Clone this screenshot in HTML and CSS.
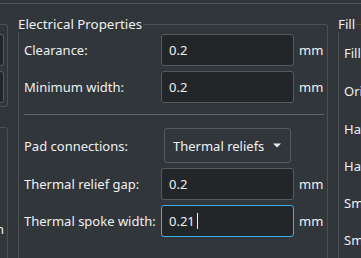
FILE: index.html
```html
<!DOCTYPE html>
<html>
    <head>
        <title>Zone Properties</title>
        <link rel="stylesheet" href="styles.css">
    </head>
    <body>
        <div class="topbar"></div>
        <div class="main">
            <div class="side">
                <div class="sidebox first">
                    <div class="stub"></div>
                    <div class="stub"></div>
                </div>
                <div class="sidebox second">
                    <div class="cut">Border style: Hatch pattern</div>
                </div>
            </div>

            <div class="group electrical">
                <span class="title">Electrical Properties</span>
                <div class="row">
                    <label>Clearance:</label>
                    <div class="field">0.2</div>
                    <span class="unit">mm</span>
                </div>
                <div class="row">
                    <label>Minimum width:</label>
                    <div class="field">0.2</div>
                    <span class="unit">mm</span>
                </div>
                <div class="sep"></div>
                <div class="row tall">
                    <label>Pad connections:</label>
                    <div class="combo">
                        <span>Thermal reliefs</span>
                        <svg class="arrow" width="8" height="5" viewBox="0 0 8 5"><polygon points="0,0.5 8,0.5 4,4.5" fill="#eff0f1"/></svg>
                    </div>
                </div>
                <div class="row">
                    <label>Thermal relief gap:</label>
                    <div class="field">0.2</div>
                    <span class="unit">mm</span>
                </div>
                <div class="row">
                    <label>Thermal spoke width:</label>
                    <div class="field focus">0.21<span class="caret"></span></div>
                    <span class="unit">mm</span>
                </div>
            </div>

            <div class="group fill">
                <span class="title">Fill</span>
                <div class="frow">Fill mode:</div>
                <div class="frow">Orientation:</div>
                <div class="frow">Hatch width:</div>
                <div class="frow short">Hatch gap:</div>
                <div class="frow short">Smoothing effort:</div>
                <div class="frow short">Smoothing amount:</div>
            </div>
        </div>
    </body>
</html>
```

FILE: styles.css
```css
body {
    margin: 0;
    width: 361px;
    height: 258px;
    overflow: hidden;
    background: #31363b;
    color: #eff0f1;
    font-family: "Noto Sans", sans-serif;
    font-size: 13px;
    line-height: 18px;
}
.topbar {
    height: 3px;
    border-bottom: 1px solid #53575c;
}
.main {
    display: flex;
    margin-top: 20px;
    height: 234px;
}

/* cut-off column on the left */
.side {
    flex: none;
    width: 8px;
    display: flex;
    flex-direction: column;
}
.sidebox {
    border: 1px solid #4b5055;
    border-left: none;
    border-radius: 0 3px 3px 0;
}
.sidebox.first {
    display: flex;
    flex-direction: column;
    gap: 5px;
    padding: 9px 0 3px;
}
.stub {
    width: 3px;
    height: 30px;
    border: 1px solid #555a5f;
    border-left: none;
    border-radius: 0 3px 3px 0;
    background: #232629;
}
.sidebox.second {
    flex: 1;
    margin-top: 20px;
    border-bottom: none;
    border-radius: 0 3px 0 0;
}
.cut {
    display: flex;
    justify-content: flex-end;
    overflow: hidden;
    white-space: nowrap;
    margin: 92px 3px 0 0;
}

/* group boxes */
.group {
    position: relative;
    flex: none;
    box-sizing: border-box;
    height: 300px;
    margin-left: 10px;
    border: 1px solid #4b5055;
    border-radius: 2px;
}
.title {
    position: absolute;
    top: -9px;
    left: -1px;
    font-size: 13.33px;
    line-height: 16px;
    padding-right: 1px;
    background: #31363b;
}
.electrical {
    width: 310px;
    display: flex;
    flex-direction: column;
    gap: 5px;
    padding: 9px 3px 0 5px;
}
.row {
    display: grid;
    grid-template-columns: 137px 133px 1fr;
    align-items: center;
    height: 32px;
}
.row.tall {
    height: 35px;
}
.field {
    box-sizing: border-box;
    height: 32px;
    display: flex;
    align-items: center;
    padding-left: 7px;
    border: 1px solid #565a5f;
    border-radius: 3px;
    background: #232629;
}
.field.focus {
    border-color: #3daee9;
}
.caret {
    width: 1px;
    height: 16px;
    margin-left: 2px;
    background: #eff0f1;
}
.unit {
    padding-left: 5px;
}
.sep {
    height: 1px;
    margin: 6px 0 8px;
    background: #5f6368;
}
.combo {
    box-sizing: border-box;
    width: 127px;
    height: 35px;
    margin-left: 3px;
    display: flex;
    align-items: center;
    justify-content: space-between;
    padding: 0 9px 0 8px;
    border: 1px solid #565a5f;
    border-radius: 3px;
}
.arrow {
    flex: none;
}
.fill {
    width: 200px;
    display: flex;
    flex-direction: column;
    gap: 5px;
    padding: 11px 0 0 5px;
}
.frow {
    height: 33px;
    display: flex;
    align-items: center;
    white-space: nowrap;
}
.frow.short {
    height: 32px;
}
```
